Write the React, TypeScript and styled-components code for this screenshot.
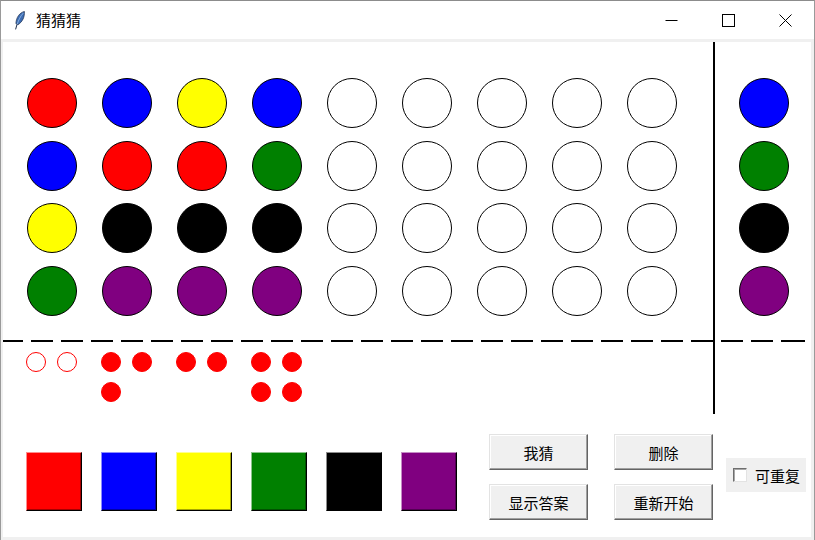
import React from "react";
import styled, { createGlobalStyle } from "styled-components";

type Color = "red" | "blue" | "yellow" | "green" | "black" | "purple";
type Hint = "exact" | "near";

interface Guess {
    pegs: Color[];
    hints: Hint[];
}

const COLORS: Record<Color, string> = {
    red: "#ff0000",
    blue: "#0000ff",
    yellow: "#ffff00",
    green: "#008000",
    black: "#000000",
    purple: "#800080",
};

const PALETTE: Color[] = ["red", "blue", "yellow", "green", "black", "purple"];
const ANSWER: Color[] = ["blue", "green", "black", "purple"];
const SLOTS = 9;

const guesses: Guess[] = [
    { pegs: ["red", "blue", "yellow", "green"], hints: ["near", "near"] },
    { pegs: ["blue", "red", "black", "purple"], hints: ["exact", "exact", "exact"] },
    { pegs: ["yellow", "red", "black", "purple"], hints: ["exact", "exact"] },
    { pegs: ["blue", "green", "black", "purple"], hints: ["exact", "exact", "exact", "exact"] },
];

const GlobalStyle = createGlobalStyle`
  html, body {
    margin: 0;
    padding: 0;
    background: #ffffff;
  }
  body {
    font-family: "Noto Sans CJK SC", "Noto Sans", sans-serif;
  }
`;

const Window = styled.div`
  width: 815px;
  height: 540px;
  box-sizing: border-box;
  display: flex;
  flex-direction: column;
  background: #f0f0f0;
  border-top: 1px solid #8c8c8c;
  border-left: 1px solid #9a9a9a;
  border-right: 1px solid #9a9a9a;
`;

const TitleBar = styled.div`
  height: 38px;
  flex: none;
  display: flex;
  align-items: center;
  background: #ffffff;
  padding-left: 13px;
`;

const AppIcon = styled.svg`
  width: 11px;
  height: 19px;
  margin-right: 11px;
  margin-top: 1px;
`;

const Title = styled.span`
  font-size: 15px;
  color: #000;
  flex: 1;
  line-height: 1;
  margin-top: -1px;
`;

const Control = styled.div`
  width: 57px;
  height: 38px;
  display: flex;
  align-items: center;
  justify-content: center;
  svg {
    width: 13px;
    height: 13px;
  }
`;

const Client = styled.div`
  flex: 1;
  display: flex;
  padding: 3px 3px 3px 2px;
  min-height: 0;
`;

const Board = styled.div`
  flex: 1;
  background: #ffffff;
  display: flex;
  flex-direction: column;
  overflow: hidden;
`;

const TopGrid = styled.div`
  display: grid;
  grid-template-columns: 710px 2px 1fr;
  grid-template-rows: 298px 2px 72px;
`;

const GuessArea = styled.div`
  grid-column: 1;
  grid-row: 1;
  display: flex;
  gap: 25px;
  padding: 36px 0 0 24px;
`;

const PegColumn = styled.div`
  display: flex;
  flex-direction: column;
  gap: 12.5px;
`;

const AnswerColumn = styled(PegColumn)`
  grid-column: 3;
  grid-row: 1;
  padding: 36px 0 0 24px;
`;

const Peg = styled.div<{ $fill?: string }>`
  width: 50px;
  height: 50px;
  box-sizing: border-box;
  border-radius: 50%;
  border: 1px solid #000;
  background: ${(p) => p.$fill ?? "#ffffff"};
`;

const Divider = styled.div`
  grid-column: 2;
  grid-row: 1 / -1;
  background: #000;
`;

const DashedLine = styled.div`
  grid-column: 1 / -1;
  grid-row: 2;
  margin-right: 6px;
  background: repeating-linear-gradient(
    to right,
    #000 0 22px,
    transparent 22px 30px
  );
  background-position: -2px 0;
`;

const FeedbackRow = styled.div`
  grid-column: 1;
  grid-row: 3;
  display: flex;
  gap: 24px;
  padding: 10px 0 0 23px;
`;

const HintGroup = styled.div`
  display: grid;
  grid-template-columns: 20px 20px;
  grid-auto-rows: 20px;
  gap: 10px 11px;
  width: 51px;
`;

const HintDot = styled.div<{ $kind: Hint }>`
  width: 20px;
  height: 20px;
  box-sizing: border-box;
  border-radius: 50%;
  border: 1px solid #ff0000;
  background: ${(p) => (p.$kind === "exact" ? "#ff0000" : "#ffffff")};
`;

const BottomBar = styled.div`
  display: flex;
  align-items: flex-start;
  padding-left: 23px;
`;

const Palette = styled.div`
  display: flex;
  gap: 19px;
  margin-top: 38px;
`;

const ColorButton = styled.button<{ $fill: string }>`
  width: 56px;
  height: 59px;
  padding: 0;
  box-sizing: border-box;
  background: ${(p) => p.$fill};
  border: 1px solid;
  border-color: rgba(255, 255, 255, 0.55) #000 #000 rgba(255, 255, 255, 0.55);
  box-shadow: inset -1px -1px 0 rgba(0, 0, 0, 0.35);
`;

const Actions = styled.div`
  display: grid;
  grid-template-columns: 99px 99px;
  grid-auto-rows: 36px;
  gap: 14px 26px;
  margin: 20px 0 0 32px;
`;

const ActionButton = styled.button`
  box-sizing: border-box;
  padding: 0;
  background: #f0f0f0;
  font-family: "Noto Sans CJK SC", "Noto Sans", sans-serif;
  font-size: 15px;
  color: #000;
  border: 1px solid;
  border-color: #e3e3e3 #646464 #646464 #e3e3e3;
  box-shadow: inset -1px -1px 0 #a0a0a0, inset 1px 1px 0 #ffffff;
`;

const RepeatToggle = styled.label`
  width: 80px;
  height: 34px;
  box-sizing: border-box;
  margin: 44px 0 0 13px;
  padding-left: 7px;
  background: #f0f0f0;
  display: flex;
  align-items: center;
  gap: 8px;
  font-size: 15px;
  color: #000;
`;

const CheckBox = styled.span`
  width: 14px;
  height: 14px;
  box-sizing: border-box;
  background: #ffffff;
  border: 1px solid;
  border-color: #6e6e6e #e3e3e3 #e3e3e3 #6e6e6e;
  box-shadow: inset 1px 1px 0 #a8a8a8;
`;

const Feather = () => (
    <AppIcon viewBox="0 0 11 19">
        <path
            d="M10.4 0.4 C5.6 1.8 2.2 6.2 1.9 12.6 L3.9 13.8 C8.2 11 10.8 6.4 10.4 0.4 Z"
            fill="#3d6db4"
            stroke="#1b2c4a"
            strokeWidth="0.7"
        />
        <path d="M9.2 2.2 C6.5 5 4.6 9 3.2 13.2" fill="none" stroke="#9cc0ea" strokeWidth="0.8" />
        <path d="M3 13.4 L1.6 18.4" fill="none" stroke="#1b2c4a" strokeWidth="1" />
    </AppIcon>
);

export default function App() {
    return (
        <>
            <GlobalStyle />
            <Window>
                <TitleBar>
                    <Feather />
                    <Title>猜猜猜</Title>
                    <Control>
                        <svg viewBox="0 0 13 13">
                            <path d="M0.5 6.5 H12.5" stroke="#000" strokeWidth="1" />
                        </svg>
                    </Control>
                    <Control>
                        <svg viewBox="0 0 13 13">
                            <rect x="0.5" y="0.5" width="12" height="12" fill="none" stroke="#000" strokeWidth="1" />
                        </svg>
                    </Control>
                    <Control>
                        <svg viewBox="0 0 13 13">
                            <path d="M0.5 0.5 L12.5 12.5 M12.5 0.5 L0.5 12.5" stroke="#000" strokeWidth="1" />
                        </svg>
                    </Control>
                </TitleBar>
                <Client>
                    <Board>
                        <TopGrid>
                            <GuessArea>
                                {Array.from({ length: SLOTS }).map((_, i) => (
                                    <PegColumn key={i}>
                                        {[0, 1, 2, 3].map((r) => {
                                            const c = guesses[i]?.pegs[r];
                                            return <Peg key={r} $fill={c ? COLORS[c] : undefined} />;
                                        })}
                                    </PegColumn>
                                ))}
                            </GuessArea>
                            <Divider />
                            <AnswerColumn>
                                {ANSWER.map((c, r) => (
                                    <Peg key={r} $fill={COLORS[c]} />
                                ))}
                            </AnswerColumn>
                            <DashedLine />
                            <FeedbackRow>
                                {guesses.map((g, i) => (
                                    <HintGroup key={i}>
                                        {g.hints.map((h, j) => (
                                            <HintDot key={j} $kind={h} />
                                        ))}
                                    </HintGroup>
                                ))}
                            </FeedbackRow>
                        </TopGrid>
                        <BottomBar>
                            <Palette>
                                {PALETTE.map((c) => (
                                    <ColorButton key={c} $fill={COLORS[c]} />
                                ))}
                            </Palette>
                            <Actions>
                                <ActionButton>我猜</ActionButton>
                                <ActionButton>删除</ActionButton>
                                <ActionButton>显示答案</ActionButton>
                                <ActionButton>重新开始</ActionButton>
                            </Actions>
                            <RepeatToggle>
                                <CheckBox />
                                可重复
                            </RepeatToggle>
                        </BottomBar>
                    </Board>
                </Client>
            </Window>
        </>
    );
}
